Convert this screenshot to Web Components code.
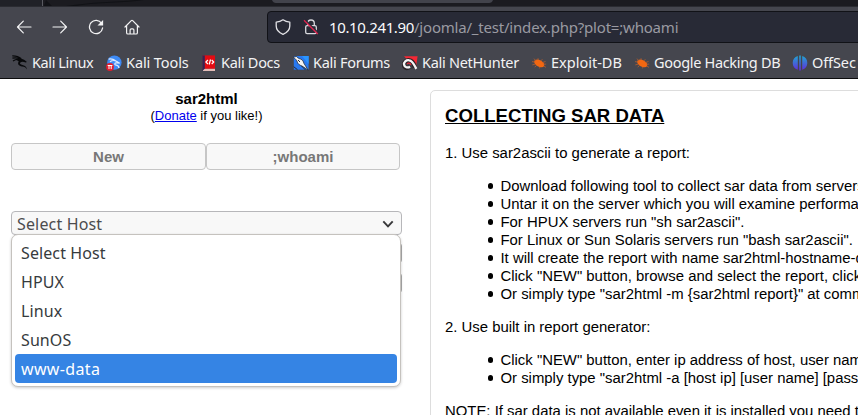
<!DOCTYPE html>
<html lang="en">
<head>
<meta charset="utf-8">
<title>sar2html</title>
<style>
html,body{margin:0;width:858px;height:415px;overflow:hidden;background:#fff}
</style>
</head>
<body>
<browser-window></browser-window>
<script>
const define=(name,html,setup)=>customElements.define(name,class extends HTMLElement{
  constructor(){
    super();
    const t=document.createElement('template');
    t.innerHTML=html;
    this.attachShadow({mode:'open'}).append(t.content.cloneNode(true));
  }
  connectedCallback(){if(setup)setup(this,this.shadowRoot)}
});

const icons={
back:['0 0 16 16','<path d="M15 8H1.7M7.3 2.2L1.5 8l5.8 5.8" fill="none" stroke="#f3f3f4" stroke-width="1.2" stroke-linecap="round" stroke-linejoin="round"/>'],
forward:['0 0 16 16','<path d="M1 8h13.3M8.7 2.2L14.5 8l-5.8 5.8" fill="none" stroke="#f3f3f4" stroke-width="1.2" stroke-linecap="round" stroke-linejoin="round"/>'],
reload:['0 0 16 16','<path d="M13.6 4.4A6.6 6.6 0 1 0 14.6 9" fill="none" stroke="#f3f3f4" stroke-width="1.3" stroke-linecap="round"/><path d="M15.1 1v5.6H9.5z" fill="#f3f3f4"/>'],
home:['0 0 16 16','<path d="M1 8L7.3 1.6q.7-.6 1.4 0L15 8M2.6 6.6v7.1q0 1.3 1.3 1.3h8.2q1.3 0 1.3-1.3V6.6M6.1 15v-4q0-1.2 1.2-1.2h1.4q1.2 0 1.2 1.2v4" fill="none" stroke="#f3f3f4" stroke-width="1.2" stroke-linecap="round" stroke-linejoin="round"/>'],
shield:['0 0 16 16','<path d="M8 .8C6 2.3 3.7 3 1.2 3.1V7c0 3.7 2.6 6.6 6.8 8.3 4.200-1.700 6.800-4.600 6.800-8.300V3.100C12.300 3 10 2.300 8 .8z" fill="none" stroke="#e2e2e6" stroke-width="1.3" stroke-linejoin="round"/>'],
lock:['0 0 16 16','<path d="M4.700 6.500V4.300a3.300 3.300 0 0 1 6.600 0v2.200" fill="none" stroke="#d8d8dd" stroke-width="1.300"/><rect x="2.700" y="6.600" width="10.600" height="8" rx="1.400" fill="none" stroke="#d8d8dd" stroke-width="1.300"/><path d="M1.900.5l13.300 13.300" stroke="#282a36" stroke-width="1.500"/><path d="M1 1.200L14.800 15" stroke="#e0224e" stroke-width="1.300"/>'],
dragon:['0 0 16 16','<path d="M.3.800C4 .7 6.600 1.400 9.200 3.800M.4 3.200C3.700 2.400 6.800 2.900 9.700 5M1 5.900C3.500 4.200 6.700 4 9 5" fill="none" stroke="#08090b" stroke-width="1.200"/><path d="M4 4.600c3-1.500 7-1.200 9.100 1l1.800 1.500-1.300.5c-1.500-.5-3.500-1.500-5.200-.2-1.200 1 .2 2.100 2.100 2.500 3.200.6 4.300 2.200 4.400 4.700-1-2.100-2.300-2.800-4.900-3.100-3.200-.4-5-2.700-3.200-5z" fill="#08090b"/>'],
tools:['0 0 16 16','<circle cx="8.400" cy="7.600" r="7.200" fill="#3d8af5"/><path d="M2.600 4.200c3-.8 5 .1 7 1.600M4 6.800c2-1.600 5.400-1.800 7.700.2l2 1.200-2.300-.2c-2.800-.8-3.700 1.700-1 2.200 1.900.4 2.500 1.500 2.600 2.900" fill="none" stroke="#dceaff" stroke-width="1.200"/><circle cx="4" cy="12" r="3.900" fill="#e11d2e"/><path d="M1.700 10.500h4.700M3 10.500v3.600M5.200 10.500v3.600" stroke="#fff" stroke-width="1"/>'],
docs:['0 0 16 16','<path d="M2 13.400h12V16H2z" fill="#e3bcb7"/><path d="M1.800.4H14v13.300H1.800z" fill="#e40b12"/><path d="M1.500.4h2.300v13.300l-2.300 2z" fill="#352455"/><path d="M6.900 5L4.900 7l2 2M10.700 5l2 2-2 2M9.500 4.500l-1.300 5" fill="none" stroke="#fff" stroke-width="1.200"/>'],
forums:['0 0 16 16','<path d="M.8 1h14.800v13.700H.8z" fill="#2878f0"/><path d="M9 1h6.600v8z" fill="#2995ff"/><path d="M.2 2.200l3.200-.7c1.200 1.400 2.600 2.100 4.300 2.600 2 .8 2.800 2.500 3.200 4.200l4.300 6.800-6.500-4.300c-2.100-.6-3.300-1.400-4.300-3.500-.5-2-1.900-3.600-4.200-5.100z" fill="#f4f4f4" stroke="#272d37" stroke-width=".8"/><path d="M5 5l2 2M.7 11.700l3.800 3M8.500 11l4 4" stroke="#252a33" stroke-width="1"/>'],
hunter:['0 0 16 16','<path d="M2 1.200h13.600L13.800 13.500z" fill="#f52835"/><path d="M12.900 12.600C11.500 5.500 6 3.300 3 7c-2.600 3.500.2 7.500 4.200 5.200" fill="none" stroke="#2a2226" stroke-width="4.400"/><path d="M5.500 8.500L9 10l2 4H5z" fill="#3a3b42"/><path d="M14.300 13.800C12.500 10.800 11 5.800 7.300 5.300 4 4.700 1.600 7.200 2.100 9.700c.5 2.700 3.200 3.400 6 2" fill="none" stroke="#f4f4f5" stroke-width="2.300"/><path d="M5 9q2-2 4 .8" fill="none" stroke="#e42635" stroke-width="1.200"/>'],
bug:['0 0 16 16','<ellipse cx="8.200" cy="8.300" rx="5.500" ry="3.300" transform="rotate(28 8.200 8.300)" fill="#f26711"/><path d="M5 6L3 3.600M7.200 5L7 3.200M9.800 5.900l1.600-1.700M4.200 7.200L1 6.600M4 9.200L1.300 9.900M5.500 10.500l-1.800 1.600M9 12l-.6 1.400M11.600 7.500l2.900-1M12.500 9.200l2.700-.1M12.800 11l2.200 1.400" stroke="#b85d2c" stroke-width=".8"/>'],
offsec:['0 0 16 16','<defs><linearGradient id="g" x2="0" y2="1"><stop stop-color="#20a6d2"/><stop offset="1" stop-color="#632bdc"/></linearGradient></defs><path d="M5.800 1v13.700C2.500 13.900.7 11.200.7 7.900S2.500 1.900 5.800 1zM7.200.6h1.600v15H7.200zM10.200 1c3.300.9 5.100 3.600 5.100 6.900s-1.800 6-5.100 6.800z" fill="url(#g)"/>'],
chevron:['0 0 12 8','<path d="M1.300 1.300L6 6.300l4.700-5" fill="none" stroke="#38383a" stroke-width="1.900"/>']
};
define('ui-icon','<style>:host{display:block;width:16px;height:16px;flex:none}svg{display:block;width:100%;height:100%}</style><svg aria-hidden="true"></svg>',(el,r)=>{
  const [box,paths]=icons[el.getAttribute('name')],svg=r.querySelector('svg');
  svg.setAttribute('viewBox',box);svg.innerHTML=paths;
});

define('tab-strip',`<style>:host{display:block;height:7px;flex:none;background:#1b1b20;border-bottom:1px solid #2a2b31;box-sizing:border-box;overflow:hidden}
svg{display:block}</style><svg width="858" height="6"><path d="M0 0h42v6H0z" fill="#202127"/><path d="M42.500 0v6" stroke="#595a61"/><path d="M46 0l6 6h-8zM76 6C96 2 125 3 144 0h-8C115 2 92 2 66 6z" fill="#111216"/><path d="M272 0h221q-1 3-4 3H276q-3 0-4-3z" fill="#42434b"/></svg>`);

define('address-bar',`<style>:host{display:flex;align-items:center;box-sizing:border-box;height:32px;width:620px;flex:none;background:#282a36;border:1px solid #111217;border-radius:4px;padding-left:7px;font:15px/20px "Noto Sans",sans-serif;color:#9a9aa2;white-space:pre}
ui-icon+ui-icon{margin-left:12px}span{margin-left:10px;letter-spacing:-.2px}b{font-weight:400;color:#fbfbfe;letter-spacing:-.36px}</style>
<ui-icon name="shield"></ui-icon><ui-icon name="lock"></ui-icon><span><b>10.10.241.90</b>/joomla/_test/index.php?plot=;whoami</span>`);

define('nav-bar',`<style>:host{display:flex;align-items:center;height:40px;flex:none;padding-left:16px;overflow:hidden}
ui-icon{margin-right:20px}address-bar{margin-left:107px}</style>
<ui-icon name="back"></ui-icon><ui-icon name="forward"></ui-icon><ui-icon name="reload"></ui-icon><ui-icon name="home"></ui-icon><address-bar></address-bar>`);

define('book-mark',`<style>:host{display:flex;align-items:center;flex:none;gap:4px;font:14.500px/20px "Noto Sans",sans-serif;color:#f3f3f4;white-space:nowrap}span{padding-bottom:1px}</style><slot name="icon"></slot><span><slot></slot></span>`,el=>{
  el.style.width=el.getAttribute('width')+'px';
  el.style.letterSpacing=el.getAttribute('tracking')+'px';
});
define('bookmark-bar',`<style>:host{display:flex;align-items:center;height:31px;flex:none;padding-left:12px;overflow:hidden}</style>
<book-mark width="94" tracking="-.4"><ui-icon slot="icon" name="dragon"></ui-icon>Kali Linux</book-mark><book-mark width="95" tracking="-.1"><ui-icon slot="icon" name="tools"></ui-icon>Kali Tools</book-mark><book-mark width="92" tracking="-.3"><ui-icon slot="icon" name="docs"></ui-icon>Kali Docs</book-mark><book-mark width="109" tracking="-.28"><ui-icon slot="icon" name="forums"></ui-icon>Kali Forums</book-mark><book-mark width="129" tracking="-.28"><ui-icon slot="icon" name="hunter"></ui-icon>Kali NetHunter</book-mark><book-mark width="103" tracking="0"><ui-icon slot="icon" name="bug"></ui-icon>Exploit-DB</book-mark><book-mark width="158" tracking="-.32"><ui-icon slot="icon" name="bug"></ui-icon>Google Hacking DB</book-mark><book-mark width="80" tracking="-.1"><ui-icon slot="icon" name="offsec"></ui-icon>OffSec</book-mark>`);

define('tab-button',`<style>:host{display:block;box-sizing:border-box;height:27px;border:1px solid #c6c6c6;border-radius:4px;background:#f8f8f8;color:#777;font:bold 15px/26px "Liberation Sans",sans-serif;text-align:center}</style><slot></slot>`);
define('list-option',`<style>:host{display:block;height:29px;padding-left:6px;border-radius:4px;font:16px/30px "Noto Sans",sans-serif;letter-spacing:.1px;color:#363b3d}:host([selected]){background:#3584e4;color:#fff;letter-spacing:.35px}</style><slot></slot>`);
define('host-select',`<style>:host{display:block;position:relative;width:391px;margin-top:41px}
.field{display:flex;align-items:center;justify-content:space-between;box-sizing:border-box;height:24px;padding:2px 7px 0 5px;border:1px solid #b7b7ba;border-radius:4px;background:#f8f8f8;color:#4c4c4e;font:16px/24px "Noto Sans",sans-serif;letter-spacing:.15px}
.field ui-icon{width:12px;height:8px}
.rest{height:18px;margin-top:8px;border:1px solid #aaa;border-radius:3px}.rest+.rest{margin-top:10px}
.menu{position:absolute;left:0;top:23px;width:388px;box-sizing:content-box;border:1px solid #c5c2be;border-radius:7px;background:#fff;box-shadow:0 1px 3px #0003;height:151px}
.items{padding:3px}</style>
<div class="field"><span>Select Host</span><ui-icon name="chevron"></ui-icon></div><div class="rest"></div><div class="rest"></div>
<div class="menu"><div class="items"><list-option>Select Host</list-option><list-option>HPUX</list-option><list-option>Linux</list-option><list-option>SunOS</list-option><list-option selected>www-data</list-option></div></div>`);
define('side-panel',`<style>:host{display:block;width:391px;flex:none;padding:11px 0 0 11px;color:#000;font-family:"Liberation Sans",sans-serif}
h1{margin:0;font-size:15px;line-height:18px;text-align:center}p{margin:0;text-align:center;font-size:13px;line-height:15px}a{color:#0000ee}
.tabs{display:grid;grid-template-columns:195px 194px;margin-top:20px}</style>
<h1>sar2html</h1><p>(<a href="#">Donate</a> if you like!)</p><div class="tabs"><tab-button>New</tab-button><tab-button>;whoami</tab-button></div><host-select></host-select>`);
define('help-panel',`<style>:host{display:block;box-sizing:border-box;width:700px;flex:none;height:500px;margin:11px 0 0 28px;padding:15px 14px;border:1px solid #ddd;border-radius:5px;color:#000;font:14.900px/18px "Liberation Sans",sans-serif;white-space:nowrap}
h2{margin:0;font-size:18.600px;line-height:20px}p{margin:18px 0 15px}ul{margin:0;padding-left:55.500px;list-style:none}ul+p{margin-top:15px}
li::before{content:"";display:inline-block;width:5.600px;height:5.600px;border-radius:50%;background:#000;margin:0 7.200px 0 -12.800px;vertical-align:2px}</style>
<h2><u>COLLECTING SAR DATA</u></h2><p>1. Use sar2ascii to generate a report:</p>
<ul><li>Download following tool to collect sar data from servers</li><li>Untar it on the server which you will examine performa</li><li>For HPUX servers run "sh sar2ascii".</li><li>For Linux or Sun Solaris servers run "bash sar2ascii".</li><li>It will create the report with name sar2html-hostname-d</li><li>Click "NEW" button, browse and select the report, click</li><li>Or simply type "sar2html -m {sar2html report}" at comm</li></ul>
<p>2. Use built in report generator:</p><ul><li>Click "NEW" button, enter ip address of host, user nam</li><li>Or simply type "sar2html -a [host ip] [user name] [pass</li></ul><p>NOTE: If sar data is not available even it is installed you need t</p>`);
define('browser-window',`<style>:host{display:flex;flex-direction:column;width:858px;height:415px;overflow:hidden}
header{flex:none;background:#45464e;border-bottom:1px solid #0c0c0d;height:78px}main{display:flex;flex:1;min-height:0;overflow:hidden;background:#fff}</style>
<header><tab-strip></tab-strip><nav-bar></nav-bar><bookmark-bar></bookmark-bar></header><main><side-panel></side-panel><help-panel></help-panel></main>`);
</script>
</body>
</html>
